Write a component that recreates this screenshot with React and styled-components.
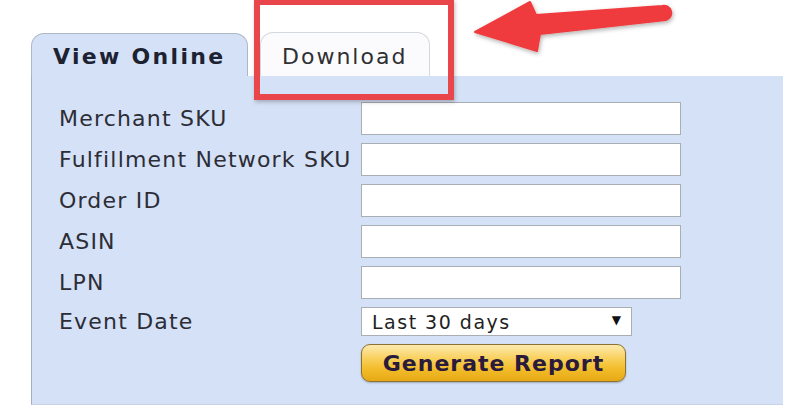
import React from 'react';
import styled, { createGlobalStyle } from 'styled-components';

const GlobalStyle = createGlobalStyle`
  html, body {
    margin: 0;
    padding: 0;
    background: #ffffff;
  }
  body {
    font-family: "DejaVu Sans", Verdana, sans-serif;
  }
`;

const Page = styled.div`
  position: relative;
  width: 804px;
  height: 408px;
  overflow: hidden;
  padding: 32px 0 0 31px;
  box-sizing: border-box;
`;

const TabRow = styled.div`
  display: flex;
  align-items: flex-end;
  gap: 12px;
  height: 44px;
`;

const Tab = styled.div`
  box-sizing: border-box;
  height: ${({ $active }) => ($active ? '43px' : '44px')};
  width: ${({ $active }) => ($active ? '217px' : '170px')};
  display: flex;
  align-items: center;
  padding-left: 21px;
  padding-top: 3px;
  border: 1px solid ${({ $active }) => ($active ? '#aeb7c7' : '#d3d7de')};
  border-bottom: none;
  border-radius: 13px 13px 0 0;
  background: ${({ $active }) => ($active ? '#d5e1f6' : '#fbfbfd')};
  color: ${({ $active }) => ($active ? '#1d2233' : '#2f3033')};
  font-size: 22px;
  font-weight: ${({ $active }) => ($active ? 700 : 400)};
  letter-spacing: ${({ $active }) => ($active ? '2.3px' : '2px')};
  white-space: nowrap;
`;

const Panel = styled.div`
  box-sizing: border-box;
  width: 752px;
  height: 329px;
  background: #d5e1f6;
  border-left: 1px solid #a6afbe;
  border-bottom: 1px solid #c9d3e5;
  padding: 26px 0 0 27px;
`;

const Form = styled.div`
  display: grid;
  grid-template-columns: 302px auto;
  row-gap: 8px;
  align-items: center;
`;

const Label = styled.label`
  font-size: 22px;
  letter-spacing: 1.2px;
  color: #2c2d36;
  white-space: nowrap;
`;

const TextInput = styled.input`
  box-sizing: border-box;
  width: 320px;
  height: 33px;
  margin: 0;
  border: 1px solid #a9adb4;
  background: #ffffff;
  outline: none;
`;

const SelectBox = styled.div`
  box-sizing: border-box;
  width: 271px;
  height: 29px;
  display: flex;
  align-items: center;
  justify-content: space-between;
  padding: 0 10px;
  border: 1px solid #a9adb4;
  background: #ffffff;
  font-size: 19px;
  letter-spacing: 1.5px;
  color: #1f1f24;
`;

const Caret = styled.span`
  font-size: 12px;
  letter-spacing: 0;
  color: #111;
  margin-top: -3px;
`;

const Button = styled.button`
  grid-column: 2;
  box-sizing: border-box;
  width: 265px;
  height: 38px;
  margin: 0;
  padding: 0;
  border: 1px solid #8d7130;
  border-radius: 9px;
  background: linear-gradient(#fdeab0 0%, #f9d262 35%, #f3bd2c 65%, #e7a915 100%);
  box-shadow: 0 1px 2px rgba(0, 0, 0, 0.25);
  font-family: "DejaVu Sans", Verdana, sans-serif;
  font-size: 22px;
  font-weight: 700;
  letter-spacing: 1px;
  color: #2a1a3b;
`;

const Highlight = styled.div`
  position: absolute;
  left: 254px;
  top: -1px;
  width: 200px;
  height: 101px;
  box-sizing: border-box;
  border: 6px solid #e8464b;
  box-shadow: 1px 2px 4px rgba(0, 0, 0, 0.25);
`;

const ArrowSvg = styled.svg`
  position: absolute;
  left: 460px;
  top: 0;
  overflow: visible;
`;

const fields = ['Merchant SKU', 'Fulfillment Network SKU', 'Order ID', 'ASIN', 'LPN'];

const Arrow = () => (
  <ArrowSvg width="220" height="60" viewBox="460 0 220 60">
    <defs>
      <filter id="shadow" x="-10%" y="-30%" width="130%" height="180%">
        <feDropShadow dx="1" dy="2" stdDeviation="2" floodColor="#000" floodOpacity="0.3" />
      </filter>
    </defs>
    <path
      d="M475 32 L530 2 L536 15 L662 6 A7 7 0 0 1 666 20 L540 34 L537 51 Z"
      fill="#ef3b3d"
      stroke="#ef3b3d"
      strokeWidth="2"
      strokeLinejoin="round"
      filter="url(#shadow)"
    />
  </ArrowSvg>
);

export default function App() {
  return (
    <>
      <GlobalStyle />
      <Page>
        <TabRow>
          <Tab $active>View Online</Tab>
          <Tab>Download</Tab>
        </TabRow>
        <Panel>
          <Form>
            {fields.map((f) => (
              <React.Fragment key={f}>
                <Label>{f}</Label>
                <TextInput type="text" />
              </React.Fragment>
            ))}
            <Label>Event Date</Label>
            <SelectBox>
              <span>Last 30 days</span>
              <Caret>▼</Caret>
            </SelectBox>
            <Button>Generate Report</Button>
          </Form>
        </Panel>
        <Highlight />
        <Arrow />
      </Page>
    </>
  );
}
